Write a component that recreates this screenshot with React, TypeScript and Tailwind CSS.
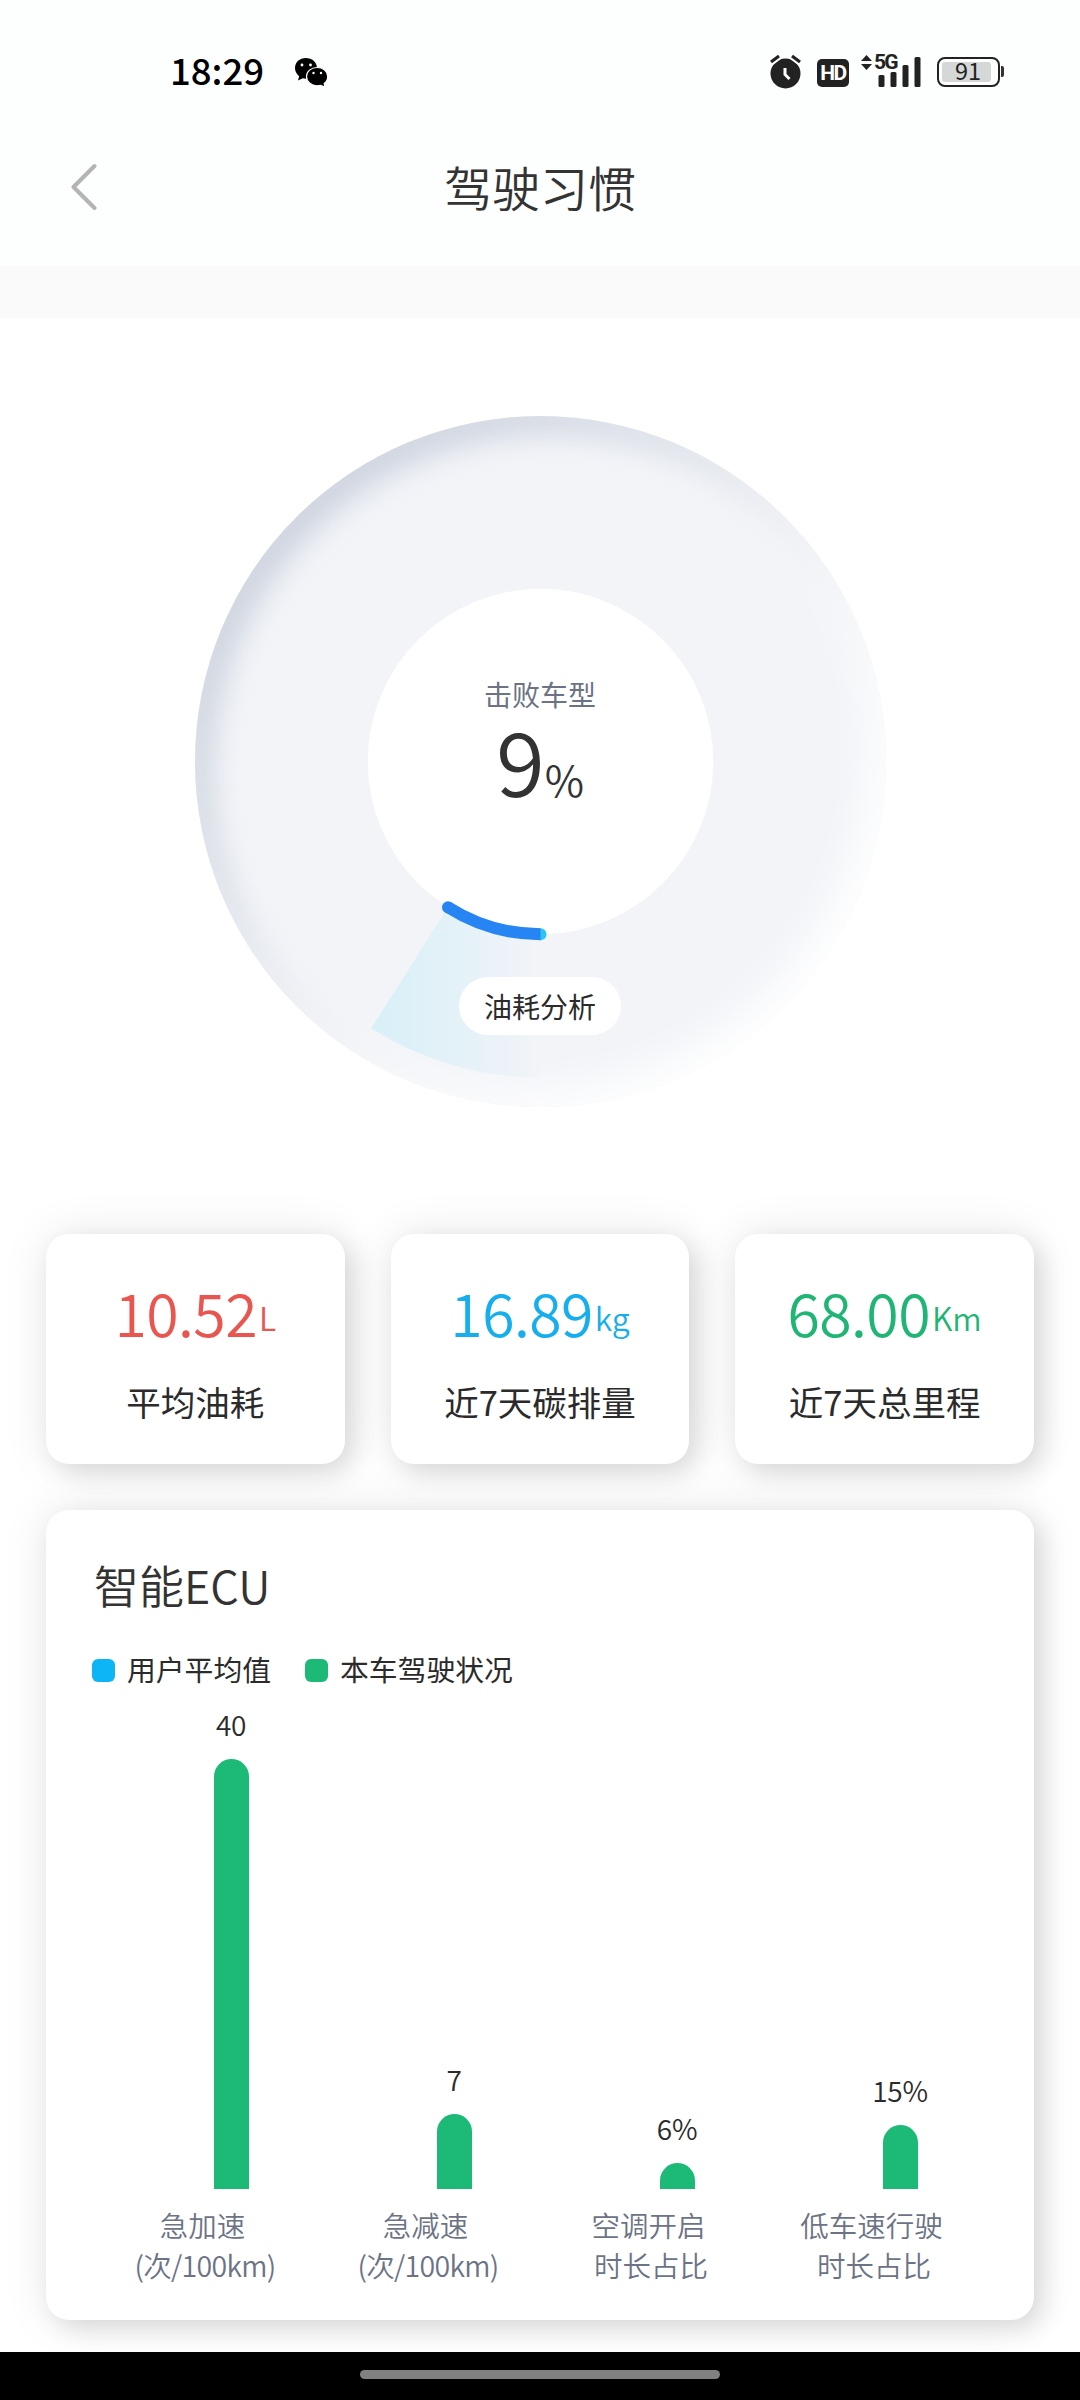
const FONT = "font-['Noto_Sans_CJK_SC','Liberation_Sans',sans-serif]";

const stats = [
  { value: '10.52', unit: 'L', label: '平均油耗', color: 'text-[#e9554f]' },
  { value: '16.89', unit: 'kg', label: '近7天碳排量', color: 'text-[#16aeec]' },
  { value: '68.00', unit: 'Km', label: '近7天总里程', color: 'text-[#1fb574]' },
];

const bars = [
  { value: '40', height: 430.5, lines: ['急加速', '(次/100km)'] },
  { value: '7', height: 75.5, lines: ['急减速', '(次/100km)'] },
  { value: '6%', height: 26, lines: ['空调开启', '时长占比'] },
  { value: '15%', height: 64.5, lines: ['低车速行驶', '时长占比'] },
];

const CARD =
  'rounded-[23px] bg-white shadow-[0_0_48px_rgba(0,0,0,0.09),9px_9px_24px_rgba(0,0,0,0.11)]';

function WechatIcon() {
  return (
    <svg className="h-[30px] w-[34px]" viewBox="0 0 34 30">
      <path
        d="M11.700 1C5.700 1 1 5.300 1 11c0 3.300 1.600 6.200 4.200 8.200L4 23.500l4.800-2.200c1 .3 2 .4 3 .4C18 21.600 23 17 23 11S17.800 1 11.700 1z"
        fill="#000"
      />
      <path
        d="M23 10.500c-6 0-10.500 4-10.500 9s4.600 9.300 10.500 9.300c1.300 0 2.500-.2 3.600-.5L31 30l-.8-3.500c2.200-1.700 3.500-4.200 3.500-7 0-5-4.500-9-10.700-9z"
        fill="#000"
        stroke="#fefefe"
        strokeWidth="1.200"
      />
      <circle cx="8" cy="8" r="1.400" fill="#fff" />
      <circle cx="16.500" cy="8" r="1.400" fill="#fff" />
      <circle cx="19.500" cy="16" r="1.200" fill="#fff" />
      <circle cx="27" cy="16" r="1.200" fill="#fff" />
    </svg>
  );
}

function AlarmIcon() {
  return (
    <svg className="h-[36px] w-[32px]" viewBox="0 0 32 36">
      <circle cx="15.500" cy="20.500" r="15" fill="#222" />
      <path d="M1 9.500 9 3.500M30 9.500 22 3.500" stroke="#fefefe" strokeWidth="6.500" />
      <path d="M1 9 9 3M30 9 22 3" stroke="#222" strokeWidth="3.200" />
      <path d="M15 15v6.500l4.500 4.500" fill="none" stroke="#fff" strokeWidth="3" />
    </svg>
  );
}

function SignalIcon() {
  return (
    <div className="relative h-[36px] w-[62px]">
      <svg className="h-[36px] w-[62px]" viewBox="0 0 62 36" fill="#222">
        <path d="M0 8 5.500 2l5.500 6zM0 11l5.500 6 5.500-6z" />
        <rect x="17.500" y="22" width="6" height="12" rx="1.500" />
        <rect x="29.500" y="19" width="6" height="15" rx="1.500" />
        <rect x="41.500" y="12" width="6" height="22" rx="1.500" />
        <rect x="53.500" y="4" width="6" height="30" rx="1.500" />
      </svg>
      <span className="absolute left-[13px] top-[-1px] text-[21px] font-bold leading-[20px] tracking-[-1.800px] text-[#222] font-['Roboto',sans-serif]">
        5G
      </span>
    </div>
  );
}

function StatusBar() {
  return (
    <div className="flex h-[146px] items-start pl-[170px] pr-[76px] pt-[53px]">
      <div className="h-[37px] w-[124px] whitespace-nowrap text-[36.500px] font-medium leading-[34px] text-black">
        18:29
      </div>
      <div className="mt-[4px]">
        <WechatIcon />
      </div>
      <div className="ml-auto flex items-start">
        <AlarmIcon />
        <div className="ml-[15px] mt-[6px] flex h-[28px] w-[32px] items-center justify-center rounded-[5px] bg-[#222] text-[21px] font-bold leading-none tracking-[-1.500px] text-white font-['Roboto',sans-serif]">
          HD
        </div>
        <div className="ml-[12px]">
          <SignalIcon />
        </div>
        <div className="ml-[14px] mt-[4px] flex h-[30px] w-[63px] items-center rounded-[8px] border-[2.500px] border-[#222] p-[3px]">
          <div className="flex h-full w-[49px] items-center justify-center rounded-[3px] bg-[#d6d7d7] pl-[3px] text-[23.500px] font-normal leading-none text-[#222]">
            <span className="-mt-[3px]">91</span>
          </div>
        </div>
        <div className="ml-[1px] mt-[13px] h-[11px] w-[3px] rounded-r-[2px] bg-[#333]" />
      </div>
    </div>
  );
}

function Header() {
  return (
    <div className="grid h-[120px] grid-cols-[200px_1fr_200px] items-start">
      <svg className="ml-[69px] mt-[16px] h-[50px] w-[28px]" viewBox="0 0 28 50">
        <path
          d="M25.500 4 4.500 25l21 21"
          fill="none"
          stroke="#b4b4b4"
          strokeWidth="4"
          strokeLinecap="round"
          strokeLinejoin="round"
        />
      </svg>
      <h1 className="mt-[10px] text-center text-[48px] font-[350] leading-[60px] text-[#333]">
        驾驶习惯
      </h1>
    </div>
  );
}

function Gauge() {
  return (
    <div className="relative ml-[194.500px] mt-[98px] h-[691px] w-[691px] shrink-0 rounded-full bg-[#f2f4f8] shadow-[inset_-16px_-16px_40px_#ffffff,inset_14px_14px_30px_rgba(145,158,182,0.42)]">
      <svg className="absolute inset-0 h-full w-full" viewBox="-345.500 -345.500 691 691">
        <defs>
          <linearGradient id="wedge" gradientUnits="userSpaceOnUse" x1="-169" y1="0" x2="0" y2="0">
            <stop offset="0" stopColor="#d8eff8" />
            <stop offset="0.550" stopColor="#e5f2f8" />
            <stop offset="1" stopColor="#f2f4f8" />
          </linearGradient>
        </defs>
        <path d="M0 0 0 316A316 316 0 0 1-169.300 266.800z" fill="url(#wedge)" />
        <circle r="172.700" fill="#fff" />
        <circle cy="172.700" r="6" fill="#2cc4f2" />
        <circle cx="-92.500" cy="145.800" r="6" fill="#2684f3" />
        <path d="M0 172.700A172.700 172.700 0 0 1-92.500 145.800" fill="none" stroke="#2684f3" strokeWidth="12" />
      </svg>
      <div className="relative flex flex-col items-center pt-[258px]">
        <div className="h-[37px] text-[28px] leading-[40px] text-[#6b7385]">击败车型</div>
        <div className="flex h-[96px] items-baseline text-[#333]">
          <span className="text-[89px] font-[350] leading-[96px]">9</span>
          <span className="text-[43px] font-[350] leading-[60px]">%</span>
        </div>
        <div className="mt-[170px] flex h-[58px] w-[162px] items-center justify-center rounded-full bg-white text-[28px] leading-[40px] text-[#2b2b2b]">
          油耗分析
        </div>
      </div>
    </div>
  );
}

function StatCards() {
  return (
    <div className="mt-[126.500px] grid grid-cols-3 gap-[46px] px-[46px]">
      {stats.map((s) => (
        <div key={s.unit} className={`flex h-[230.500px] flex-col items-center pt-[38px] ${CARD}`}>
          <div className={`flex h-[80px] items-baseline font-[350] ${s.color}`}>
            <span className="text-[59px] leading-[80px] tracking-[-0.600px]">{s.value}</span>
            <span className="relative -top-[6px] ml-[2px] text-[32px] leading-[40px]">{s.unit}</span>
          </div>
          <div className="mt-[25px] whitespace-nowrap text-[34.500px] leading-[48px] text-[#2b2b2b]">{s.label}</div>
        </div>
      ))}
    </div>
  );
}

function Chart() {
  return (
    <div className={`mx-[46px] mt-[45.500px] h-[810px] shrink-0 px-[46px] pt-[43px] ${CARD}`}>
      <h2 className="pl-[2px] text-[45px] font-[350] leading-[64px] text-[#333]">智能ECU</h2>
      <div className="mt-[24px] flex h-[60px] items-center text-[28.800px] leading-[40px] text-[#2b2b2b]">
        <span className="h-[23px] w-[23px] rounded-[6px] bg-[#0db5f7]" />
        <span className="-mt-[3px] ml-[12px] w-[178px]">用户平均值</span>
        <span className="h-[23px] w-[23px] rounded-[6px] bg-[#1dba77]" />
        <span className="-mt-[3px] ml-[12px]">本车驾驶状况</span>
      </div>
      <div className="grid h-[488.500px] w-[892px] grid-cols-4">
        {bars.map((b) => (
          <div key={b.lines[0]} className="flex flex-col items-center justify-end pl-[55px]">
            <span className="mb-[15px] text-[28px] font-[350] leading-[40px] tracking-[-0.300px] text-[#2b2b2b]">{b.value}</span>
            <div className="w-[35px] rounded-t-[17.500px] bg-[#1dba77]" style={{ height: b.height }} />
          </div>
        ))}
      </div>
      <div className="mt-[16px] grid w-[892px] grid-cols-4 text-center text-[28.500px] font-[350] leading-[39.500px] text-[#6b7385]">
        {bars.map((b) => (
          <div key={b.lines[0]} className="-ml-[2px]">
            <div>{b.lines[0]}</div>
            <div className={b.lines[1].startsWith('(') ? 'pl-[5px] tracking-[-0.700px]' : 'pl-[5px]'}>{b.lines[1]}</div>
          </div>
        ))}
      </div>
    </div>
  );
}

export default function App() {
  return (
    <div className={`flex h-[2400px] w-[1080px] flex-col overflow-hidden bg-white ${FONT}`}>
      <div className="bg-[#fdfefe]">
        <StatusBar />
        <Header />
      </div>
      <div className="h-[52px] shrink-0 bg-[#fafafa]" />
      <Gauge />
      <StatCards />
      <Chart />
      <div className="relative mt-auto flex h-[48px] shrink-0 justify-center bg-black pt-[18px]">
        <div className="h-[9px] w-[360px] rounded-full bg-[#808080]" />
      </div>
    </div>
  );
}
